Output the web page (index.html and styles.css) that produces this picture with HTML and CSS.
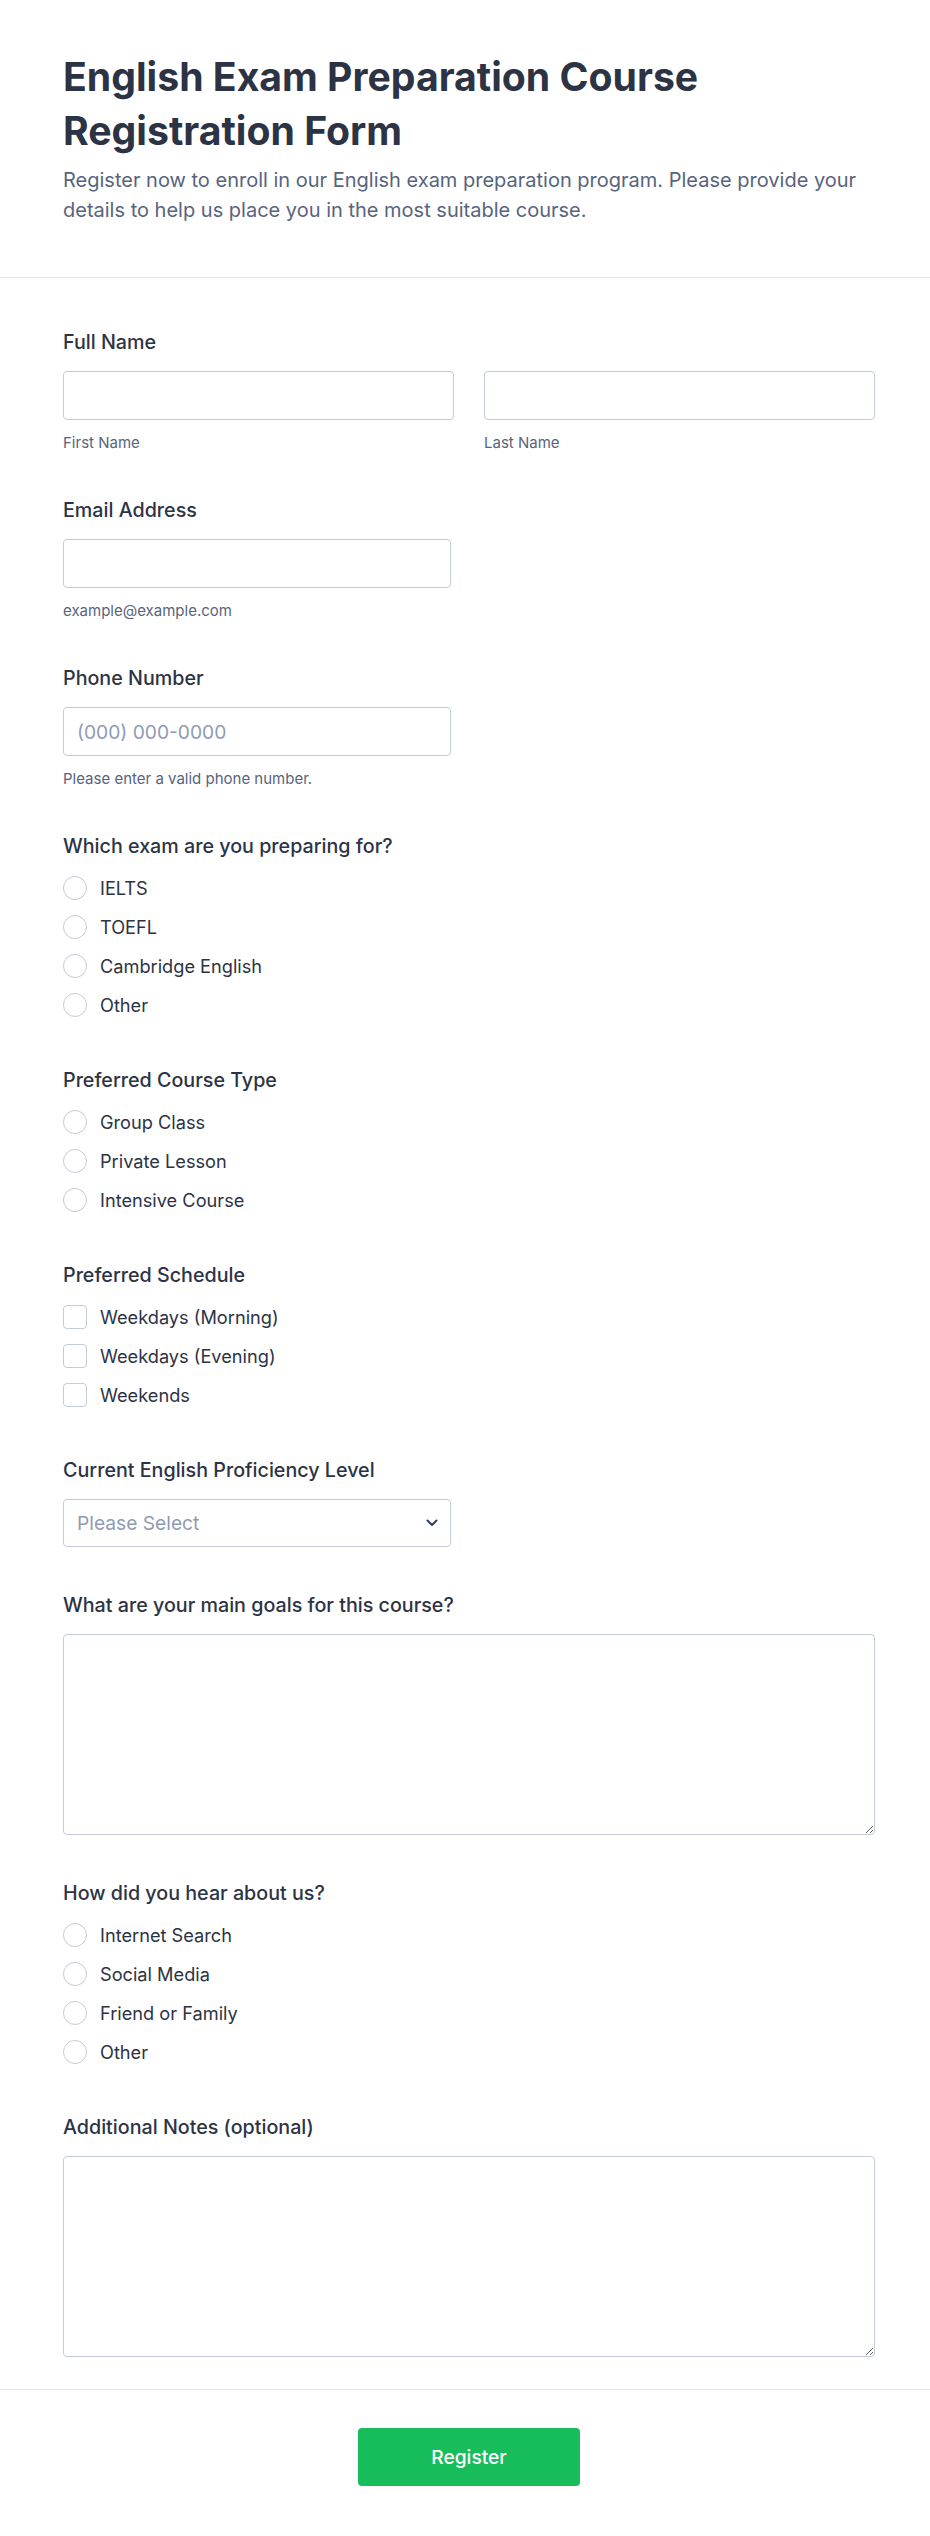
FILE: index.html
```html
<!DOCTYPE html>
<html lang="en">
<head>
<meta charset="utf-8">
<title>English Exam Preparation Course Registration Form</title>
<link rel="stylesheet" href="styles.css">
</head>
<body>
<form class="form">
  <header class="form-header">
    <h1 class="form-title">English Exam Preparation Course Registration Form</h1>
    <p class="form-desc">Register now to enroll in our English exam preparation program. Please provide your details to help us place you in the most suitable course.</p>
  </header>

  <div class="form-body">
    <div class="field">
      <div class="field-label">Full Name</div>
      <div class="name-row">
        <div class="name-col">
          <input class="text-input" type="text">
          <div class="sublabel">First Name</div>
        </div>
        <div class="name-col">
          <input class="text-input" type="text">
          <div class="sublabel">Last Name</div>
        </div>
      </div>
    </div>

    <div class="field">
      <div class="field-label">Email Address</div>
      <input class="text-input half" type="email">
      <div class="sublabel">example@example.com</div>
    </div>

    <div class="field">
      <div class="field-label">Phone Number</div>
      <input class="text-input half" type="tel" placeholder="(000) 000-0000">
      <div class="sublabel">Please enter a valid phone number.</div>
    </div>

    <div class="field field-options">
      <div class="field-label">Which exam are you preparing for?</div>
      <div class="options">
        <label class="option"><input class="radio" type="radio" name="exam"><span>IELTS</span></label>
        <label class="option"><input class="radio" type="radio" name="exam"><span>TOEFL</span></label>
        <label class="option"><input class="radio" type="radio" name="exam"><span>Cambridge English</span></label>
        <label class="option"><input class="radio" type="radio" name="exam"><span>Other</span></label>
      </div>
    </div>

    <div class="field field-options">
      <div class="field-label">Preferred Course Type</div>
      <div class="options">
        <label class="option"><input class="radio" type="radio" name="type"><span>Group Class</span></label>
        <label class="option"><input class="radio" type="radio" name="type"><span>Private Lesson</span></label>
        <label class="option"><input class="radio" type="radio" name="type"><span>Intensive Course</span></label>
      </div>
    </div>

    <div class="field field-options">
      <div class="field-label">Preferred Schedule</div>
      <div class="options">
        <label class="option"><input class="checkbox" type="checkbox"><span>Weekdays (Morning)</span></label>
        <label class="option"><input class="checkbox" type="checkbox"><span>Weekdays (Evening)</span></label>
        <label class="option"><input class="checkbox" type="checkbox"><span>Weekends</span></label>
      </div>
    </div>

    <div class="field">
      <div class="field-label">Current English Proficiency Level</div>
      <div class="select-wrap">
        <select class="select">
          <option>Please Select</option>
          <option>Beginner</option>
          <option>Intermediate</option>
          <option>Advanced</option>
        </select>
        <svg class="select-arrow" width="12" height="8" viewBox="0 0 12 8" aria-hidden="true"><path d="M1.5 1.5 L6 6 L10.5 1.5" fill="none" stroke="#343c6a" stroke-width="2" stroke-linecap="round" stroke-linejoin="round"/></svg>
      </div>
    </div>

    <div class="field">
      <div class="field-label">What are your main goals for this course?</div>
      <textarea class="textarea"></textarea>
    </div>

    <div class="field field-options">
      <div class="field-label">How did you hear about us?</div>
      <div class="options">
        <label class="option"><input class="radio" type="radio" name="hear"><span>Internet Search</span></label>
        <label class="option"><input class="radio" type="radio" name="hear"><span>Social Media</span></label>
        <label class="option"><input class="radio" type="radio" name="hear"><span>Friend or Family</span></label>
        <label class="option"><input class="radio" type="radio" name="hear"><span>Other</span></label>
      </div>
    </div>

    <div class="field field-last">
      <div class="field-label">Additional Notes (optional)</div>
      <textarea class="textarea"></textarea>
    </div>
  </div>

  <footer class="form-footer">
    <button class="submit" type="button">Register</button>
  </footer>
</form>
</body>
</html>
```

FILE: styles.css
```css
* { box-sizing: border-box; }

html, body {
  margin: 0;
  padding: 0;
  background: #ffffff;
}

body {
  font-family: Inter, "Noto Sans", "Liberation Sans", sans-serif;
  color: #2c3345;
}

.form {
  display: flex;
  flex-direction: column;
}

.form-header {
  padding: 50px 55px 52px 63px;
  border-bottom: 1px solid #e3e6ee;
}

.form-title {
  margin: 0;
  font-size: 39.2px;
  line-height: 54px;
  font-weight: 700;
  color: #2c3345;
}

.form-desc {
  margin: 7px 0 0;
  font-size: 20px;
  line-height: 30px;
  color: #57647e;
}

.form-body {
  padding: 52px 55px 32px 63px;
  display: flex;
  flex-direction: column;
}

.field {
  display: flex;
  flex-direction: column;
  align-items: flex-start;
  margin-bottom: 46px;
}

.field-options {
  margin-bottom: 50px;
}

.field-last {
  margin-bottom: 0;
}

.field-label {
  font-size: 19.7px;
  line-height: 24px;
  font-weight: 500;
  color: #2c3345;
  margin-bottom: 17px;
}

.name-row {
  display: grid;
  grid-template-columns: 1fr 1fr;
  column-gap: 30px;
  width: 100%;
}

.name-col {
  display: flex;
  flex-direction: column;
}

.text-input {
  width: 100%;
  height: 49px;
  border: 1px solid #c3cad8;
  border-radius: 4px;
  padding: 0 13px;
  font-family: inherit;
  font-size: 19.2px;
  color: #2c3345;
  background: #fff;
  outline: none;
}

.text-input.half {
  width: 388px;
}

.text-input::placeholder {
  color: #8f9bb3;
}

.sublabel {
  margin-top: 14px;
  font-size: 15px;
  line-height: 18px;
  color: #57647e;
}

.options {
  display: flex;
  flex-direction: column;
  gap: 13px;
}

.option {
  display: flex;
  align-items: center;
  height: 26px;
  font-size: 18.2px;
  color: #2c3345;
  cursor: pointer;
}

.radio,
.checkbox {
  appearance: none;
  -webkit-appearance: none;
  margin: 0 13px 0 0;
  width: 24px;
  height: 24px;
  border: 1px solid #c3cad8;
  background: #fff;
  flex: none;
}

.radio { border-radius: 50%; }
.checkbox { border-radius: 4px; }

.select-wrap {
  position: relative;
  width: 388px;
}

.select {
  appearance: none;
  -webkit-appearance: none;
  width: 100%;
  height: 48px;
  border: 1px solid #c3cad8;
  border-radius: 4px;
  padding: 0 36px 0 13px;
  font-family: inherit;
  font-size: 19.2px;
  color: #8f9bb3;
  background: #fff;
  outline: none;
}

.select-arrow {
  position: absolute;
  right: 13px;
  top: 20px;
  pointer-events: none;
}

.textarea {
  width: 100%;
  height: 201px;
  border: 1px solid #c3cad8;
  border-radius: 4px;
  padding: 10px 13px;
  font-family: inherit;
  font-size: 19.2px;
  color: #2c3345;
  background: #fff;
  outline: none;
  resize: vertical;
  display: block;
}

.form-footer {
  border-top: 1px solid #e3e6ee;
  padding: 38px 55px 50px 63px;
  display: flex;
  justify-content: center;
}

.submit {
  width: 222px;
  height: 58px;
  border: none;
  border-radius: 4px;
  background: #18bd5b;
  color: #ffffff;
  font-family: inherit;
  font-size: 19.2px;
  font-weight: 500;
  cursor: pointer;
}
```
